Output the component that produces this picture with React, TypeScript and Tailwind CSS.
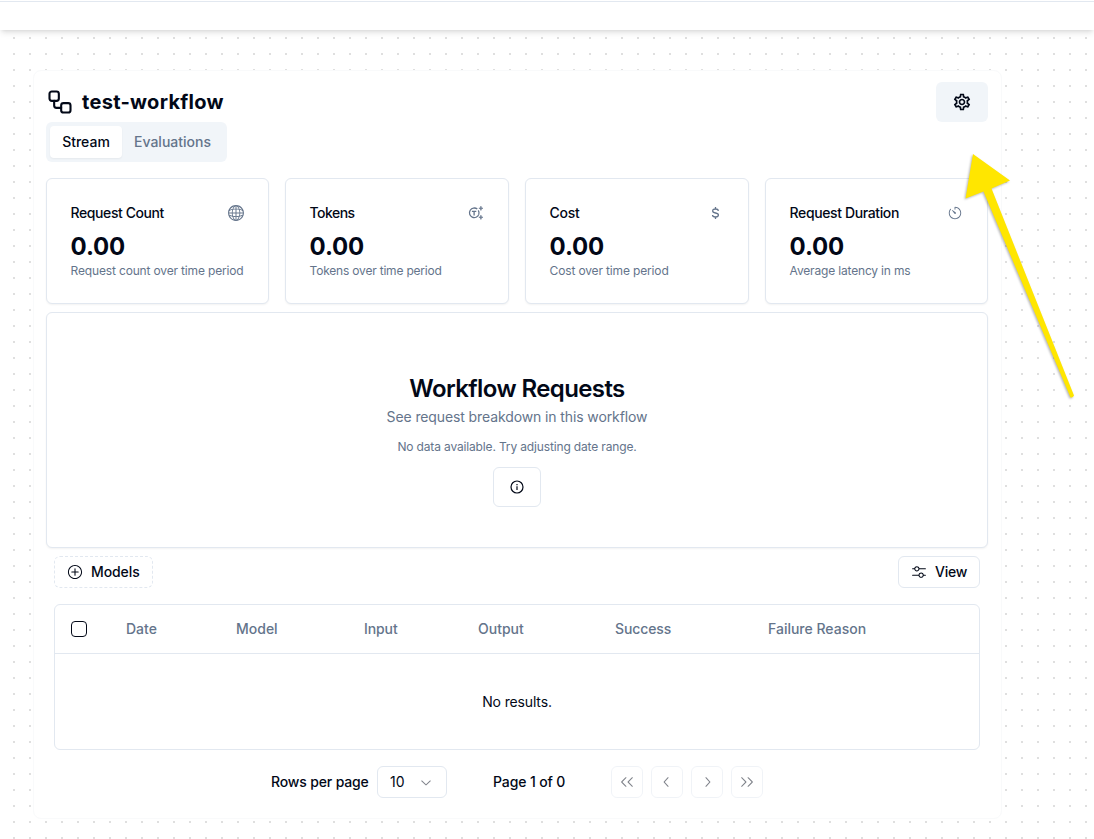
import React from "react";
import { Workflow } from "lucide-react";
import {
  RxGlobe,
  RxTimer,
  RxPlusCircled,
  RxMixerHorizontal,
  RxChevronDown,
  RxChevronLeft,
  RxChevronRight,
  RxDoubleArrowLeft,
  RxDoubleArrowRight,
} from "react-icons/rx";
import { MdOutlineSettings } from "react-icons/md";

function TokenIcon() {
  return (
    <svg className="shrink-0" width="16" height="16" viewBox="0 0 16 16" fill="none" stroke="currentColor" strokeWidth="1.3">
      <path d="M9.300 4.100A4.800 4.800 0 1 0 10.800 9.400" />
      <path d="M10.300 5.400A4.800 4.800 0 0 1 10.800 9.400" />
      <path d="M3.900 6.400h4.400M6.100 6.400v4" />
      <path d="M12.900 1.200c.2 1.400.7 1.900 2 2.100-1.300.2-1.800.7-2 2.100-.2-1.400-.7-1.900-2-2.100 1.300-.2 1.800-.7 2-2.100Z" fill="currentColor" strokeWidth=".7" />
      <path d="M12.900 10.200c.2 1.400.7 1.900 2 2.100-1.300.2-1.800.7-2 2.100-.2-1.400-.7-1.900-2-2.100 1.300-.2 1.800-.7 2-2.100Z" fill="currentColor" strokeWidth=".7" />
    </svg>
  );
}

function DollarIcon() {
  return (
    <svg className="shrink-0" width="16" height="16" viewBox="0 0 16 16" fill="none" stroke="currentColor" strokeWidth="1.3">
      <path d="M7.500 2v2M7.500 12v2M10.400 5.900C10.200 4.600 9.100 4 7.500 4 5.800 4 4.700 4.700 4.700 5.900c0 3 5.700 1.200 5.700 4.200C10.400 11.300 9.200 12 7.500 12s-2.900-.7-3-2" />
    </svg>
  );
}

function InfoIcon() {
  return (
    <svg width="16" height="16" viewBox="0 0 16 16" fill="none" stroke="currentColor" strokeWidth="1.2">
      <circle cx="8" cy="8" r="6" />
      <path d="M8 7.300v3.700M8 5v1.200" />
    </svg>
  );
}

type Stat = { title: string; sub: string; icon: React.ReactNode; titleCls: string; subCls: string };

const stats: Stat[] = [
  {
    title: "Request Count",
    sub: "Request count over time period",
    icon: <RxGlobe className="shrink-0" size={18} />,
    titleCls: "tracking-[-0.42px]",
    subCls: "tracking-[-0.16px]",
  },
  {
    title: "Tokens",
    sub: "Tokens over time period",
    icon: <TokenIcon />,
    titleCls: "tracking-[-0.55px]",
    subCls: "tracking-[-0.2px]",
  },
  {
    title: "Cost",
    sub: "Cost over time period",
    icon: <DollarIcon />,
    titleCls: "tracking-[-0.25px]",
    subCls: "tracking-[-0.15px]",
  },
  {
    title: "Request Duration",
    sub: "Average latency in ms",
    icon: <RxTimer className="shrink-0" size={14} />,
    titleCls: "tracking-[-0.38px]",
    subCls: "tracking-[-0.17px]",
  },
];

function StatCard({ title, sub, icon, titleCls, subCls }: Stat) {
  return (
    <div className="h-[126px] rounded-md border border-[#e2e8f0] bg-white pt-6 pr-6 pl-[23.6px] shadow-xs">
      <div className="flex h-5 items-center justify-between whitespace-nowrap">
        <span className={`text-sm font-medium ${titleCls}`}>{title}</span>
        <span className="flex w-4 justify-center text-[#64748b]">{icon}</span>
      </div>
      <div className="mt-2 text-2xl font-bold tracking-[-0.15px]">0.00</div>
      <p className={`text-xs whitespace-nowrap text-[#64748b] ${subCls}`}>{sub}</p>
    </div>
  );
}

const pagers = [RxDoubleArrowLeft, RxChevronLeft, RxChevronRight, RxDoubleArrowRight];

export default function App() {
  return (
    <div className="relative h-[839px] w-[1094px] overflow-hidden font-[Inter,sans-serif] text-[#020817] [background:repeating-linear-gradient(90deg,#fff_0_13px,transparent_13px_15px,#fff_15px_16px),repeating-linear-gradient(180deg,#fff_0_5px,#dfdfdf_5px_7px,#fff_7px_16px)]">
      <header className="h-[30px] bg-white pt-px shadow-md">
        <div className="border-t border-[#e2e8f0]" />
      </header>
      <main className="mt-10 ml-[33px] h-[749px] w-[969px] rounded-lg border border-[#f9fafb] bg-white px-3 pt-[11px]">
        <div className="flex h-10 w-[942px] items-center justify-between">
          <div className="flex items-center gap-2">
            <Workflow size={28} strokeWidth={1.8} />
            <h1 className="text-xl font-bold tracking-[0.3px]">test-workflow</h1>
          </div>
          <button className="flex h-10 w-[52px] items-center justify-center rounded-md bg-[#f1f5f9]">
            <MdOutlineSettings size={20} />
          </button>
        </div>
        <div className="flex h-10 w-[181px] rounded-md bg-[#f1f5f9] p-1 text-sm font-medium">
          <div className="flex w-[72px] items-center justify-center rounded-sm bg-white shadow-xs">Stream</div>
          <div className="flex flex-1 items-center justify-center text-[#64748b]">Evaluations</div>
        </div>
        <div className="mt-4 grid w-[942px] grid-cols-[223px_224px_224px_223px] gap-4">
          {stats.map((s) => (
            <StatCard key={s.title} {...s} />
          ))}
        </div>
        <section className="mt-2 flex h-[236px] w-[942px] flex-col items-center rounded-md border border-[#e2e8f0] bg-white shadow-xs">
          <h2 className="mt-[64px] text-2xl leading-6 font-semibold tracking-[-0.6px]">Workflow Requests</h2>
          <p className="mt-[6px] text-sm tracking-[-0.11px] text-[#64748b]">See request breakdown in this workflow</p>
          <p className="mt-3 text-xs tracking-[-0.15px] text-[#64748b]">No data available. Try adjusting date range.</p>
          <button className="mt-3 flex h-10 w-12 items-center justify-center rounded-md border border-[#e2e8f0]">
            <InfoIcon />
          </button>
        </section>
        <div className="w-[942px] px-2 pt-2">
          <div className="flex justify-between text-sm font-medium">
            <button className="flex h-8 w-[99px] items-center gap-2 rounded-md border border-dashed border-[#e2e8f0] pl-3 tracking-[-0.1px]">
              <RxPlusCircled size={16} />
              Models
            </button>
            <button className="flex h-8 w-[82px] items-center gap-2 rounded-md border border-[#e2e8f0] pl-3 tracking-[-0.2px]">
              <RxMixerHorizontal size={16} />
              View
            </button>
          </div>
          <div className="mt-4 h-[146px] rounded-md border border-[#e2e8f0] text-sm">
            <div className="flex h-[49px] items-center border-b border-[#e2e8f0] pl-4 font-medium text-[#64748b]">
              <span className="mr-[39px] h-4 w-4 rounded-sm border border-[#020817]" />
              <span className="w-[110px]">Date</span>
              <span className="w-[128px]">Model</span>
              <span className="w-[114px] tracking-[-0.1px]">Input</span>
              <span className="w-[137px]">Output</span>
              <span className="w-[153px] tracking-[-0.1px]">Success</span>
              <span>Failure Reason</span>
            </div>
            <div className="flex h-24 items-center justify-center tracking-[-0.15px]">No results.</div>
          </div>
          <div className="mt-4 flex h-8 items-center pl-[217px] text-sm font-medium whitespace-nowrap">
            <span className="w-[106px] tracking-[-0.15px]">Rows per page</span>
            <button className="flex h-8 w-[70px] items-center justify-between rounded-md border border-[#e2e8f0] px-3 font-normal">
              10
              <RxChevronDown size={16} className="opacity-50" />
            </button>
            <span className="ml-[46px] w-[118px] tracking-[-0.12px]">Page 1 of 0</span>
            <div className="flex gap-2">
              {pagers.map((Icon, i) => (
                <button key={i} className="flex h-8 w-8 items-center justify-center rounded-md border border-[#e2e8f0] opacity-50">
                  <Icon size={16} />
                </button>
              ))}
            </div>
          </div>
        </div>
      </main>
      <svg className="absolute inset-0 drop-shadow-[-1px_1px_1px_rgba(0,0,0,0.3)]" width="1094" height="839">
        <path d="M973 154L1010 180.500L991.500 188.500L1074 395.500Q1073 398 1070.500 397.500L983.500 191.500L965.500 198.500Z" fill="#ffe600" />
      </svg>
    </div>
  );
}
